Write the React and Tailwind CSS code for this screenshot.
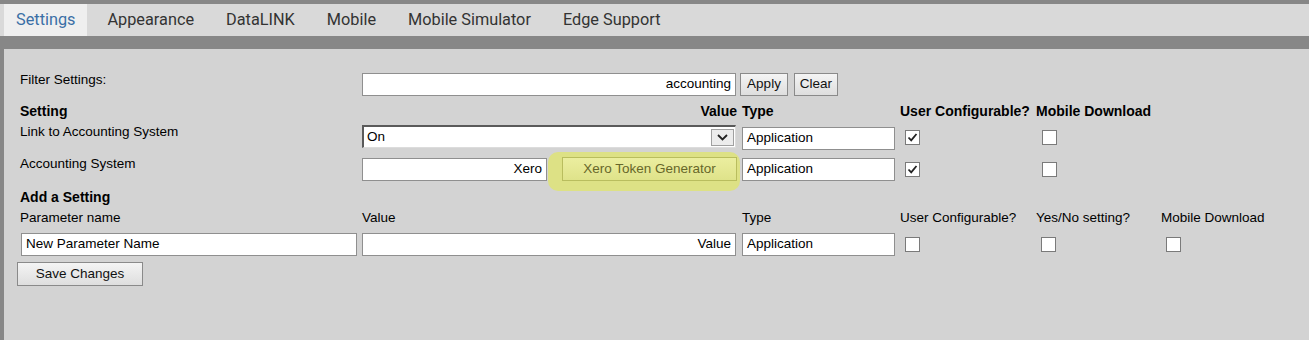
import React from 'react';

const tabs = ['Settings', 'Appearance', 'DataLINK', 'Mobile', 'Mobile Simulator', 'Edge Support'];

const cols = 'grid grid-cols-[342px_380px_158px_136px_125px_1fr]';

const TextBox = ({ value, className = '', right = false }) => (
  <div
    className={`h-[23px] bg-white border border-[#8f8f8f] flex items-center px-[4px] text-black ${right ? 'justify-end' : ''} ${className}`}
  >
    {value}
  </div>
);

const CheckBox = ({ checked = false, className = '' }) => (
  <div className={`w-[15px] h-[15px] bg-white border border-[#7a7a7a] flex items-center justify-center ${className}`}>
    {checked && (
      <svg width="11" height="11" viewBox="0 0 11 11">
        <polyline points="1.5,5.5 4.2,8.3 9.5,2" fill="none" stroke="#222" strokeWidth="1.8" />
      </svg>
    )}
  </div>
);

const Btn = ({ children, className = '' }) => (
  <button
    className={`h-[23px] border border-[#8a8a8a] bg-gradient-to-b from-[#f4f4f4] to-[#dedede] text-[#111] flex items-center justify-center ${className}`}
  >
    {children}
  </button>
);

export default function App() {
  return (
    <div className="w-[1309px] h-[340px] bg-[#878787] overflow-hidden pt-[4px]">
      {/* Tab strip */}
      <div className="h-[32px] bg-[#d9d9d9] flex items-stretch pl-[4px] gap-[8px] font-['Roboto',sans-serif] text-[16.3px]">
        {tabs.map((t, i) => (
          <div
            key={t}
            className={`flex items-center px-[12px] ${i === 0 ? 'bg-[#efefef] text-[#3b6fa6]' : 'text-[#333]'}`}
          >
            {t}
          </div>
        ))}
      </div>

      {/* Settings panel */}
      <div className="mt-[13px] ml-[4px] h-[300px] bg-[#d3d3d3] pl-[16px] pt-[24px] font-['Liberation_Sans',Arial,sans-serif] text-[13.5px] text-black">
        {/* filter */}
        <div className={`${cols} h-[23px]`}>
          <div className="-mt-[1px] leading-[16px]">Filter Settings:</div>
          <div className="col-span-2 flex items-center">
            <TextBox value="accounting" right className="w-[374px]" />
            <Btn className="ml-[4px] w-[48px]">Apply</Btn>
            <Btn className="ml-[6px] w-[44px]">Clear</Btn>
          </div>
        </div>

        {/* header */}
        <div className={`${cols} h-[17px] mt-[7px] font-bold text-[14px] leading-[17px]`}>
          <div>Setting</div>
          <div className="text-right pr-[5px]">Value</div>
          <div>Type</div>
          <div>User Configurable?</div>
          <div className="whitespace-nowrap">Mobile Download</div>
        </div>

        {/* row 1 */}
        <div className={`${cols} h-[23px] mt-[5px] items-start`}>
          <div className="-mt-[1px] leading-[16px]">Link to Accounting System</div>
          <div>
            <div className="w-[374px] h-[23px] bg-white border-t-2 border-l-2 border-t-[#5a5a5a] border-l-[#5a5a5a] border-r border-b border-r-[#dcdcdc] border-b-[#dcdcdc] flex items-center justify-between pl-[3px] pr-[1px]">
              <span>On</span>
              <div className="w-[23px] h-[17px] bg-[#ececec] border border-[#a0a0a0] flex items-center justify-center">
                <svg width="11" height="7" viewBox="0 0 11 7">
                  <polyline points="1,1 5.5,5.5 10,1" fill="none" stroke="#222" strokeWidth="1.8" />
                </svg>
              </div>
            </div>
          </div>
          <div className="pt-[2px]">
            <TextBox value="Application" className="w-[153px]" />
          </div>
          <div className="pt-[5px] pl-[5px]">
            <CheckBox checked />
          </div>
          <div className="pt-[5px] pl-[6px]">
            <CheckBox />
          </div>
        </div>

        {/* row 2 */}
        <div className={`${cols} h-[24px] mt-[9px] items-start`}>
          <div className="-mt-[1px] leading-[16px]">Accounting System</div>
          <div className="flex items-start">
            <TextBox value="Xero" right className="w-[185px] mt-[1px]" />
            <div className="relative ml-[15px]">
              <div className="absolute -left-[14px] -top-[5px] w-[192px] h-[39px] rounded-[10px] bg-[#dde185]" />
              <button className="relative w-[175px] h-[24px] border border-[#b9bd5e] bg-gradient-to-b from-[#ebee9f] to-[#dfe38a] text-[#67672a]">
                Xero Token Generator
              </button>
            </div>
          </div>
          <div className="pt-[1px]">
            <TextBox value="Application" className="w-[153px]" />
          </div>
          <div className="pt-[5px] pl-[5px]">
            <CheckBox checked />
          </div>
          <div className="pt-[5px] pl-[6px]">
            <CheckBox />
          </div>
        </div>

        {/* add a setting */}
        <div className="mt-[8px] h-[17px] font-bold text-[14px] leading-[17px]">Add a Setting</div>
        <div className={`${cols} h-[16px] mt-[4px] leading-[16px]`}>
          <div>Parameter name</div>
          <div>Value</div>
          <div>Type</div>
          <div>User Configurable?</div>
          <div>Yes/No setting?</div>
          <div>Mobile Download</div>
        </div>
        <div className={`${cols} h-[23px] mt-[7px] items-start`}>
          <div className="pl-[1px]">
            <TextBox value="New Parameter Name" className="w-[336px]" />
          </div>
          <div>
            <TextBox value="Value" right className="w-[374px]" />
          </div>
          <div>
            <TextBox value="Application" className="w-[153px]" />
          </div>
          <div className="pt-[4px] pl-[5px]">
            <CheckBox />
          </div>
          <div className="pt-[4px] pl-[5px]">
            <CheckBox />
          </div>
          <div className="pt-[4px] pl-[5px]">
            <CheckBox />
          </div>
        </div>

        <Btn className="mt-[6px] -ml-[3px] w-[126px] h-[24px]">Save Changes</Btn>
      </div>
    </div>
  );
}
